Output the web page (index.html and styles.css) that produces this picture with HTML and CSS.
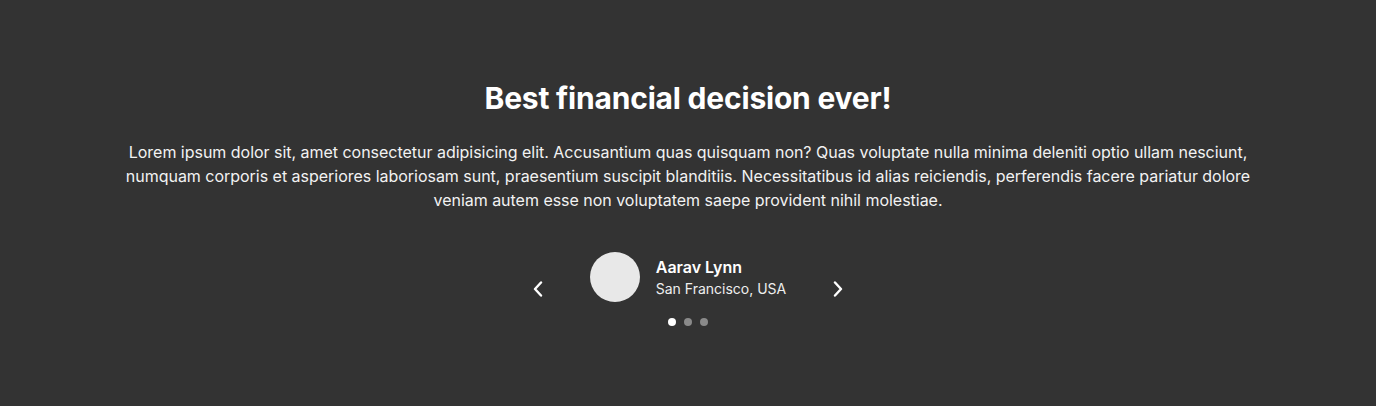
FILE: index.html
```html
<!DOCTYPE html>
<html lang="en">
<head>
<meta charset="utf-8">
<title>Testimonial</title>
<link rel="stylesheet" href="styles.css">
</head>
<body>
<section class="testimonial">
  <h2 class="title">Best financial decision ever!</h2>
  <p class="quote">Lorem ipsum dolor sit, amet consectetur adipisicing elit. Accusantium quas quisquam non? Quas voluptate nulla minima deleniti optio ullam nesciunt, numquam corporis et asperiores laboriosam sunt, praesentium suscipit blanditiis. Necessitatibus id alias reiciendis, perferendis facere pariatur dolore veniam autem esse non voluptatem saepe provident nihil molestiae.</p>
  <div class="author-row">
    <button class="nav" aria-label="Previous">
      <svg width="12" height="16" viewBox="0 0 12 16"><path d="M9 1.5 L3 8 L9 14.5" fill="none" stroke="#fff" stroke-width="2.4" stroke-linecap="round" stroke-linejoin="round"/></svg>
    </button>
    <div class="author">
      <div class="avatar"></div>
      <div class="author-info">
        <div class="name">Aarav Lynn</div>
        <div class="place">San Francisco, USA</div>
      </div>
    </div>
    <button class="nav" aria-label="Next">
      <svg width="12" height="16" viewBox="0 0 12 16"><path d="M3 1.5 L9 8 L3 14.5" fill="none" stroke="#fff" stroke-width="2.4" stroke-linecap="round" stroke-linejoin="round"/></svg>
    </button>
  </div>
  <div class="dots">
    <span class="dot active"></span>
    <span class="dot"></span>
    <span class="dot"></span>
  </div>
</section>
</body>
</html>
```
FILE: styles.css
```css
html, body {
  margin: 0;
  padding: 0;
  background: #333333;
}
body {
  font-family: Inter, "Noto Sans", sans-serif;
  color: #f2f2f2;
  height: 406px;
}
.testimonial {
  display: flex;
  flex-direction: column;
  align-items: center;
  padding: 80px 120px 0;
  text-align: center;
}
.title {
  margin: 0;
  font-size: 30px;
  line-height: 36px;
  font-weight: 700;
  color: #ffffff;
  letter-spacing: -0.2px;
}
.quote {
  margin: 24px 0 0;
  font-size: 16px;
  line-height: 24px;
  max-width: 1136px;
  letter-spacing: -0.025px;
}
.author-row {
  display: flex;
  align-items: center;
  margin-top: 40px;
  gap: 0;
}
.nav {
  background: none;
  border: 0;
  padding: 0;
  width: 24px;
  height: 24px;
  display: flex;
  align-items: center;
  justify-content: center;
  margin-top: 24px;
  cursor: pointer;
}
.author {
  display: flex;
  align-items: center;
  gap: 16px;
  margin: 0 40px;
}
.avatar {
  width: 50px;
  height: 50px;
  border-radius: 50%;
  background: #e8e8e8;
}
.author-info {
  text-align: left;
  padding-top: 2px;
}
.name {
  font-size: 16px;
  line-height: 22px;
  font-weight: 600;
  color: #ffffff;
}
.place {
  font-size: 14px;
  line-height: 22px;
  color: #eeeeee;
}
.dots {
  display: flex;
  gap: 8px;
  margin-top: 16px;
}
.dot {
  width: 8px;
  height: 8px;
  border-radius: 50%;
  background: #8a8a8a;
}
.dot.active {
  background: #ffffff;
}
```
